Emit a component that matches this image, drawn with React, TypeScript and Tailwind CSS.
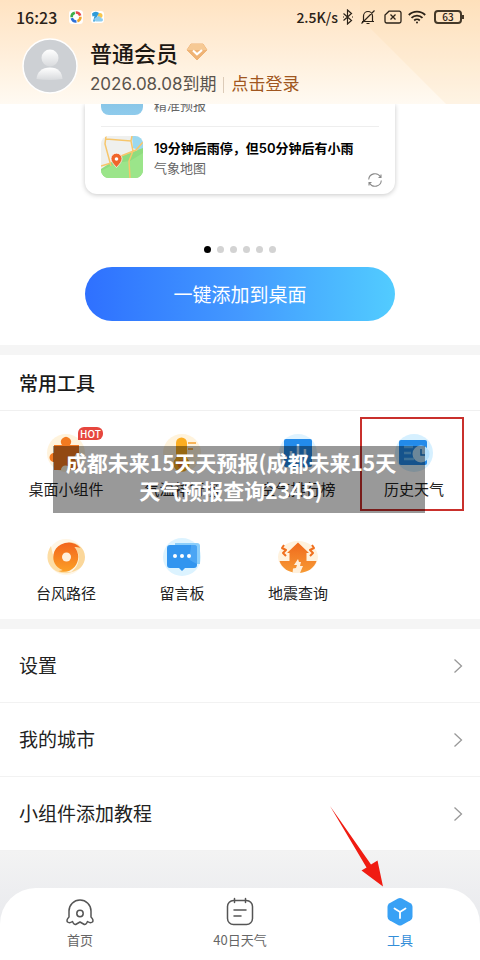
import React from "react";

const StatusBar = () => (
  <div className="flex h-[34px] items-center justify-between px-4 text-[#2b2218]">
    <div className="flex items-center gap-2">
      <span className="text-base font-medium">16:23</span>
      <svg className="ml-1 size-3.5" viewBox="0 0 12 12">
        <rect width="12" height="12" rx="3" fill="#fff" />
        <g fill="none" strokeWidth="2.2">
          <path d="M2.2 6.2A3.8 3.8 0 0 1 5 2.3" stroke="#3fae4c" />
          <path d="M5.8 2.2a3.8 3.8 0 0 1 3.8 2.7" stroke="#e5484d" />
          <path d="M9.8 5.8a3.8 3.8 0 0 1-2.6 3.8" stroke="#f0a52b" />
          <path d="M6.4 9.8a3.8 3.8 0 0 1-4-2.8" stroke="#2d6fd8" />
        </g>
      </svg>
      <svg className="size-3.5" viewBox="0 0 14 14">
        <rect y="1" width="13" height="12" rx="3" fill="#fff" />
        <circle cx="9" cy="5.5" r="2.5" fill="#f8c64b" />
        <path d="M1 3.5Q4 .5 8 3L6 6.500l-2 5H2l1.500-5.500-2 .5z" fill="#2f9bd8" />
        <path d="M5 11.500a2 2 0 0 1 .5-4 2.600 2.600 0 0 1 4.700.8 1.600 1.600 0 0 1 .3 3.200z" fill="#8ccdf0" />
      </svg>
    </div>
    <div className="flex items-center">
      <span className="text-sm font-medium">2.5K/s</span>
      <svg className="ml-1 h-4 w-3" viewBox="0 0 12 16" fill="none" stroke="currentColor" strokeWidth="1.2">
        <path d="M1.5 4.5l8 7L5.5 15V1l4 3.5-8 7" />
        <path d="M1 8h1M10 8h1" />
      </svg>
      <svg className="ml-1.5 size-4" viewBox="0 0 16 16" fill="none" stroke="currentColor" strokeWidth="1.2">
        <path d="M2 12.5h12M3.5 12.5V7a4.5 4.5 0 0 1 9 0v5.5M6.5 14.5h3M14.5 1.5L1.5 14.5" />
      </svg>
      <svg className="ml-2 h-4 w-[18px]" viewBox="0 0 18 16" fill="none" stroke="currentColor" strokeWidth="1.3">
        <path d="M5 2.200h10.300a1.700 1.700 0 0 1 1.700 1.700v8.400a1.700 1.700 0 0 1-1.700 1.700H2.700A1.700 1.700 0 0 1 1 12.300V6z" />
        <path d="M6.500 5.500l5 5M11.500 5.500l-5 5" />
      </svg>
      <svg className="ml-1.5 h-4 w-[18px]" viewBox="0 0 18 16" fill="none" stroke="currentColor" strokeWidth="1.8">
        <path d="M.8 6a11.500 11.500 0 0 1 16.400 0M3.500 8.900a7.800 7.800 0 0 1 11 0M6.200 11.500a4 4 0 0 1 5.600 0" />
        <circle cx="9" cy="13.500" r="1" fill="currentColor" stroke="none" />
      </svg>
      <div className="ml-2 flex items-center">
        <span className="flex h-3.5 w-7 items-center justify-center rounded border-2 border-[#443828] text-[10px] font-medium leading-none">
          63
        </span>
        <span className="h-1 w-0.5 bg-[#443828]" />
      </div>
    </div>
  </div>
);

const Header = () => (
  <header className="relative overflow-hidden bg-linear-to-b from-[#ffe3c2] via-[#ffeed9] to-[#fffaf2]">
    <svg className="absolute right-0 top-0 h-full w-[120px]" viewBox="0 0 120 104" preserveAspectRatio="none">
      <path d="M0 18L86 104H120V0H0z" fill="#f8d49c" opacity=".16" />
    </svg>
    <div className="relative">
      <StatusBar />
      <div className="flex h-[70px] items-start gap-3 pl-[22px]">
        <svg className="mt-1 size-14" viewBox="0 0 56 56">
          <defs>
            <linearGradient id="person" x1="0" y1="0" x2="0" y2="1">
              <stop offset="0" stopColor="#fff" />
              <stop offset="1" stopColor="#d8dadd" />
            </linearGradient>
          </defs>
          <circle cx="28" cy="28" r="27" fill="#cdd0d4" stroke="#fff" strokeWidth="1.500" />
          <circle cx="28" cy="20" r="8.500" fill="url(#person)" />
          <path d="M14.500 41C15 34 20 29.500 28 29.500S40 34 40.500 41q-12.500 2-26 0z" fill="url(#person)" />
        </svg>
        <div>
          <div className="flex h-9 items-center gap-2">
            <h1 className="text-[22px] font-medium text-[#1c1712]">普通会员</h1>
            <svg className="h-[18px] w-[22px]" viewBox="0 0 22 18">
              <path d="M5 1h12l4 6-10 10L1 7z" fill="#efb375" stroke="#efb375" strokeLinejoin="round" />
              <path d="M5 1h12l4 6H1z" fill="#f6c994" />
              <path d="M7 7.500l4 3.800 5-4.300" fill="none" stroke="#fff" strokeWidth="2.200" />
            </svg>
          </div>
          <div className="flex h-[30px] items-center font-['Inter','Noto_Sans_CJK_SC',sans-serif] text-[17px]">
            <span className="text-[#5a534c]">2026.08.08到期</span>
            <span className="mx-[7px] h-4 w-px bg-[#dccbb8]" />
            <a href="#login" className="text-[#a05620]">点击登录</a>
          </div>
        </div>
      </div>
    </div>
  </header>
);

const MapIcon = () => (
  <svg className="size-[42px] rounded-lg" viewBox="0 0 42 42">
    <rect width="42" height="42" fill="#eff0ee" />
    <path d="M31 0h11v16L32 12z" fill="#9bd8f0" />
    <path d="M0 33L18 21 42 12v30H0z" fill="#8fdc7e" />
    <path d="M0 35l15-8 14-2 13-8v25H0z" fill="#9be58a" />
    <path d="M5 0L4 8l6 22M5 3l25 2L31 0M30 5l2 10-4 10 1 17M20 20l15-6 7-8M0 30l10-3" fill="none" stroke="#f7c66b" strokeWidth="1.500" />
    <path d="M15.500 31.500c-3.500-4-5.500-6-5.500-8.800a5.500 5.500 0 0 1 11 0c0 2.800-2 4.800-5.500 8.800z" fill="#f0652b" stroke="#fff" strokeWidth=".7" />
    <circle cx="15.500" cy="23" r="1.800" fill="#fff" />
  </svg>
);

const WidgetPreview = () => (
  <section className="px-[85px] pb-6">
    <div className="rounded-b-xl bg-white px-4 shadow-[0_1px_5px_rgba(0,0,0,0.22)] [clip-path:inset(0_-8px_-8px_-8px)]">
      {/* only the tail of the first row shows below the header */}
      <div className="flex h-[11px] items-end gap-[11px] overflow-hidden">
        <div className="size-[42px] shrink-0 rounded-b-lg bg-linear-to-b from-[#7ab8dc] to-[#8fcbec]" />
        <p className="text-[13px] leading-5 text-[#666]">精准预报</p>
      </div>
      <div className="mt-[11px] border-t border-[#eee] pt-[9px]">
        <div className="flex h-[58px] items-start gap-[11px]">
          <MapIcon />
          <div className="whitespace-nowrap text-[13px]">
            <p className="font-['Inter','Noto_Sans_CJK_SC',sans-serif] leading-6 font-semibold text-black">
              19分钟后雨停，但50分钟后有小雨
            </p>
            <p className="leading-4 text-[#666]">气象地图</p>
          </div>
        </div>
      </div>
      <div className="-mt-[22px] flex h-[22px] items-start justify-end">
        <svg className="-mr-1 size-4" viewBox="0 0 16 16" fill="none" stroke="#8a8a8a" strokeWidth="1.100">
          <path d="M1.700 7.500A6.300 6.300 0 0 1 13.500 5M14.300 8.500A6.300 6.300 0 0 1 2.500 11M14 2.500V5.500h-2.500M2 13.500v-3h2.500" />
        </svg>
      </div>
    </div>
    <div className="mt-[52px] flex justify-center gap-1.5">
      <span className="size-[7px] rounded-full bg-black" />
      {[1, 2, 3, 4, 5].map((dot) => (
        <span key={dot} className="size-[7px] rounded-full bg-[#d3d3d3]" />
      ))}
    </div>
    <button
      type="button"
      className="mt-3.5 h-[54px] w-full rounded-full bg-linear-to-r from-[#2f70ff] via-[#4499ff] to-[#52ccff] text-[19px] text-white"
    >
      一键添加到桌面
    </button>
  </section>
);

const PuzzleIcon = () => (
  <svg className="size-10" viewBox="0 0 40 40">
    <circle cx="20" cy="20" r="19" fill="#fff3dc" />
    <path d="M8 12h8a5 5 0 1 1 8 0h9v8a4.500 4.500 0 0 0 0 9v8h-9a4.500 4.500 0 0 0-9 0H8v-8a4.500 4.500 0 1 1 0-9z" fill="#f37a20" />
  </svg>
);

const ThermometerIcon = () => (
  <svg className="size-10" viewBox="0 0 40 40">
    <circle cx="20" cy="20" r="19" fill="#fff3dc" />
    <path d="M14 10a5.500 5.500 0 0 1 11 0v15a8 8 0 1 1-11 0z" fill="#fbad21" />
    <path d="M26 10h8M26 16h5" stroke="#f8b458" strokeWidth="2" />
    <circle cx="19.500" cy="31" r="4" fill="#f37a20" />
  </svg>
);

const RankIcon = () => (
  <svg className="size-10" viewBox="0 0 40 40">
    <circle cx="20" cy="20" r="19" fill="#dff3ff" />
    <rect x="6" y="6" width="28" height="28" rx="2" fill="#238bea" />
    <path d="M13 30V18M20 30V11M27 30V16" stroke="#bfe2ff" strokeWidth="2.500" />
  </svg>
);

const HistoryIcon = () => (
  <svg className="size-10" viewBox="0 0 40 40">
    <circle cx="20" cy="20" r="19" fill="#d6f0ff" />
    <rect x="5" y="7" width="28" height="25" rx="2" fill="#238bea" />
    <path d="M10 14h9M10 20h7M10 26h10" stroke="#65b9f8" strokeWidth="2.500" />
    <circle cx="27" cy="21" r="8.500" fill="#b5e2ff" />
    <path d="M27 16v6h4" fill="none" stroke="#187bd3" strokeWidth="1.500" />
  </svg>
);

const TyphoonIcon = () => (
  <svg className="size-10" viewBox="0 0 40 40">
    <defs>
      <linearGradient id="typhoon" x1="0" y1="0" x2="0" y2="1">
        <stop offset="0" stopColor="#f2641c" />
        <stop offset="1" stopColor="#fca026" />
      </linearGradient>
    </defs>
    <circle cx="20" cy="20" r="18" fill="#fff6e6" />
    <path d="M22 5c9 0 17 6 17 15 0 8-6 14-14 15 7-5 9-12 7-19-2-6-6-9-10-11z" fill="#fbd79a" />
    <path d="M5 9C0 16 0 26 7 32c6 5 14 5 19 3-8 0-14-5-17-11-2-5-3-10-4-15z" fill="#fddda4" />
    <path d="M15 7.500c7-4 15-2 19.500 3.500-4-1.500-6-1-6-1 5 6 5 14 0 20-4 4.500-10 6-16 4 3-.2 4-1 4-1C9 30 6.500 24 7.500 17.500c.8-4.500 3.500-8 7.500-10z" fill="url(#typhoon)" />
    <circle cx="20.500" cy="20" r="4.500" fill="#fff0dc" />
  </svg>
);

const MessageIcon = () => (
  <svg className="size-10" viewBox="0 0 40 40">
    <circle cx="20" cy="20" r="19" fill="#dcf3ff" />
    <path d="M13 6h22a3 3 0 0 1 3 3v18H13z" fill="#8bcefb" />
    <path d="M8 8h24a3 3 0 0 1 3 3v17a3 3 0 0 1-3 3H23l-3 3-3-3H8a3 3 0 0 1-3-3V11a3 3 0 0 1 3-3z" fill="#3295ef" />
    <path d="M29 8h3a3 3 0 0 1 3 3v16q-9-4-9-7 3-5 3-12z" fill="#55adf7" opacity=".7" />
    <g fill="#fff">
      <circle cx="13" cy="19" r="2" />
      <circle cx="20" cy="19" r="2" />
      <circle cx="27" cy="19" r="2" />
    </g>
  </svg>
);

const EarthquakeIcon = () => (
  <svg className="size-10" viewBox="0 0 40 40">
    <defs>
      <linearGradient id="quake" x1="0" y1="0" x2="0" y2="1">
        <stop offset="0" stopColor="#f0691c" />
        <stop offset="1" stopColor="#f79a35" />
      </linearGradient>
    </defs>
    <ellipse cx="20" cy="20" rx="20" ry="16" fill="#fff2de" />
    <path d="M20 5.500l11 10.500h-2.500v8h10C36.500 31 29 36 20 36S3.500 31 1.500 24h10v-8H9z" fill="url(#quake)" />
    <path d="M20 22l-4 6h3l-1 3-3 .5-.5 4.500H22l3-7h-3l1-4h-2z" fill="#fff0dc" />
    <path d="M6 8L4 11l4 2-3 3 3 3M34 8l2 3-4 2 3 3-3 3" fill="none" stroke="#f0701f" strokeWidth="2" strokeLinejoin="round" />
  </svg>
);

const tools = [
  { name: "桌面小组件", icon: PuzzleIcon, hot: true },
  { name: "气温排行榜", icon: ThermometerIcon },
  { name: "空气排行榜", icon: RankIcon },
  { name: "历史天气", icon: HistoryIcon, marked: true },
  { name: "台风路径", icon: TyphoonIcon },
  { name: "留言板", icon: MessageIcon },
  { name: "地震查询", icon: EarthquakeIcon },
];

const ToolGrid = () => (
  <section className="border-y-[10px] border-[#f5f5f5]">
    <h2 className="border-b border-[#f0f0f0] px-[19px] text-[19px] font-medium leading-[55px] text-[#1a1a1a]">
      常用工具
    </h2>
    <div className="relative grid grid-cols-4 gap-y-5 px-2 pt-5">
      {tools.map(({ name, icon: Icon, hot, marked }) => (
        <button key={name} type="button" className="relative flex h-[84px] w-full flex-col items-center whitespace-nowrap pt-0.5">
          <Icon />
          <span className="mt-[5px] text-[15px] leading-[22px] text-[#222]">{name}</span>
          {hot && (
            <span className="absolute left-1/2 -top-1 ml-3 rounded-md rounded-bl-none bg-[#e6463e] px-0.5 text-[10px] font-medium leading-[13px] text-white">
              HOT
            </span>
          )}
          {marked && <span className="absolute left-1 right-2 -top-3.5 h-[94px] border-2 border-[#c9302c]" />}
        </button>
      ))}
      <p className="absolute left-[53px] right-[55px] top-[35px] bg-black/40 pb-[9px] pr-4 pt-0.5 text-center text-[21px] font-bold leading-7 whitespace-nowrap text-white">
        成都未来15天天预报(成都未来15天
        <br />
        天气预报查询2345)
      </p>
    </div>
  </section>
);

const SettingsList = () => (
  <ul>
    {["设置", "我的城市", "小组件添加教程"].map((label) => (
      <li key={label} className="border-b border-[#f2f2f2]">
        <a href="#settings" className="flex h-[73px] items-center justify-between pl-[19px] pr-[17px] text-[19px] text-[#222]">
          {label}
          <svg className="h-4 w-2.5" viewBox="0 0 10 16" fill="none" stroke="#999" strokeWidth="1.300">
            <path d="M1.500 1.500L8.500 8l-7 6.500" />
          </svg>
        </a>
      </li>
    ))}
  </ul>
);

const TabBar = () => (
  <nav className="grid h-[72px] grid-cols-3 rounded-t-[36px] bg-white text-[13px] text-[#666]">
    <a href="#home" className="flex flex-col items-center gap-1 pt-[9px]">
      <svg className="size-[30px]" viewBox="0 0 30 30" fill="none" stroke="#555" strokeWidth="1.500" strokeLinejoin="round">
        <path d="M4 20v-6a11 11 0 0 1 22 0v6q3 3 1.500 5-2 1.500-5-.5-1.500 4-4 2.500L15 25l-3.500 2q-2.500 1.500-4-2.500-3 2-5 .5Q1 23 4 20z" />
        <circle cx="15" cy="16.500" r="3.200" />
      </svg>
      <span className="leading-[18px]">首页</span>
    </a>
    <a href="#forecast" className="flex flex-col items-center gap-1 pt-[9px]">
      <svg className="size-[30px]" viewBox="0 0 30 30" fill="none" stroke="#555" strokeWidth="1.500" strokeLinecap="round">
        <rect x="2.500" y="3.500" width="25" height="24" rx="6" />
        <path d="M9.500 1.500v4M20.500 1.500v4M9 13h12M9 19h7" />
      </svg>
      <span className="leading-[18px]">40日天气</span>
    </a>
    <a href="#tools" className="relative flex flex-col items-center gap-1 pt-[9px] text-[#338ed8]">
      <svg className="size-[30px]" viewBox="0 0 30 30">
        <path d="M13 1.500q2-1 4 0l8.500 4.800q2 1.200 2 3.500v10q0 2.300-2 3.500L17 28q-2 1-4 0l-8.500-4.700q-2-1.200-2-3.500v-10q0-2.300 2-3.500z" fill="#38a1f5" />
        <path d="M9.500 11.500l5.500 3.500 5.500-3.500M15 15v6" fill="none" stroke="#fff" strokeWidth="1.800" strokeLinecap="round" />
      </svg>
      <span className="leading-[18px]">工具</span>
      <svg className="absolute bottom-full right-1/2 mr-4 h-[82px] w-[54px]" viewBox="0 0 54 82">
        <path d="M0 0L41 58.500 47.500 54.500 53 80.500 31.500 64.500 36.500 61.500z" fill="#f01c12" />
      </svg>
    </a>
  </nav>
);

const App = () => {
  return (
    <div className="flex min-h-screen flex-col bg-white font-['Noto_Sans_CJK_SC',sans-serif]">
      <Header />
      <main className="flex flex-1 flex-col">
        <WidgetPreview />
        <ToolGrid />
        <SettingsList />
      </main>
      <div className="bg-linear-to-b from-[#f3f3f3] to-[#ebecef] to-50% pt-[37px]">
        <TabBar />
      </div>
    </div>
  );
};

export default App;
